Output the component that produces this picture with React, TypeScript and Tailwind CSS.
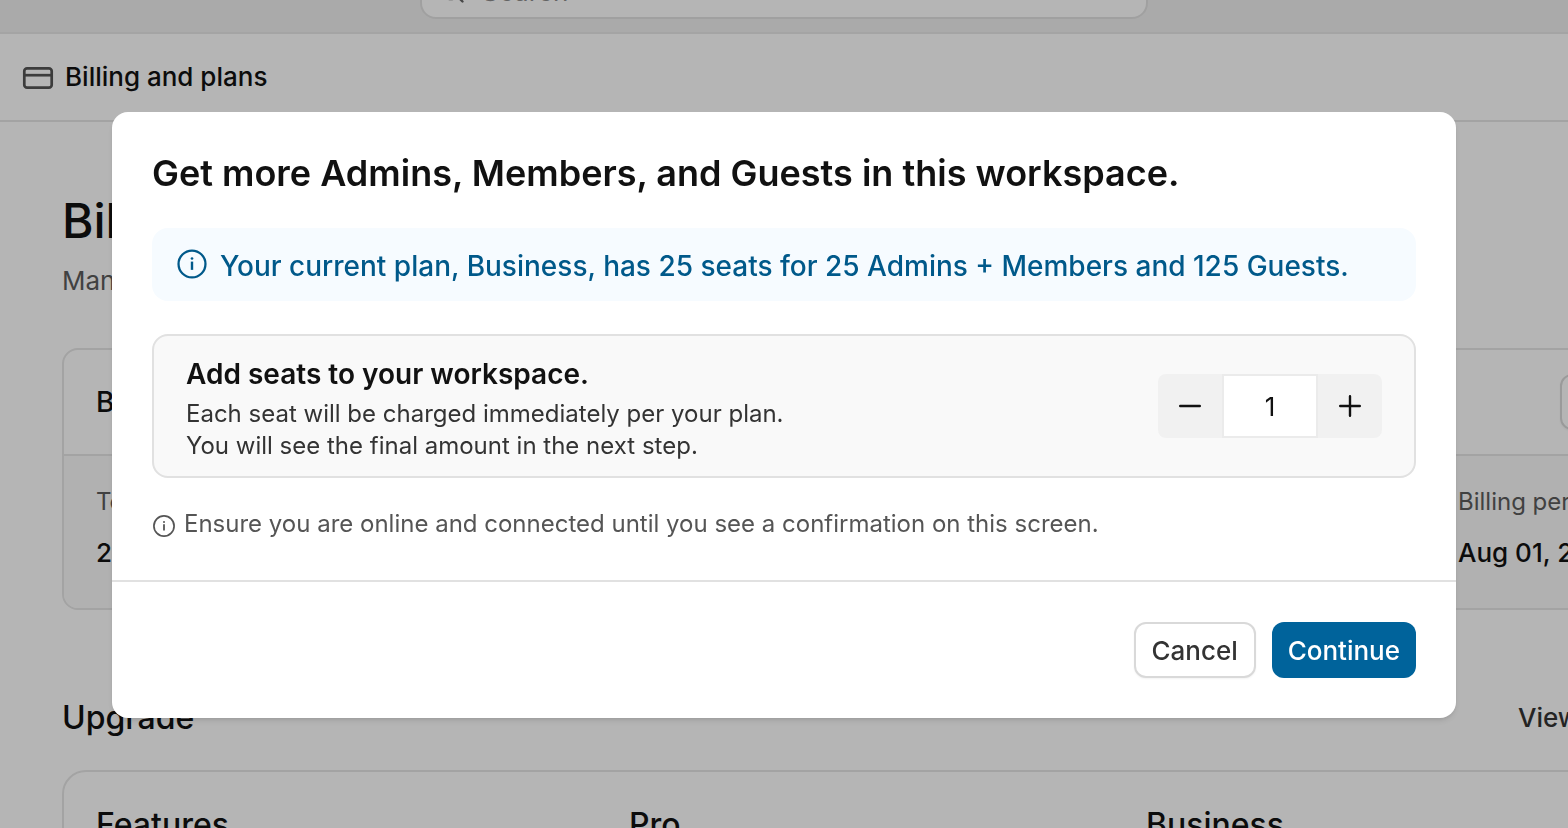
import { useState } from 'react';
import { Search } from 'lucide-react';

const InfoIcon = ({ className }: { className: string }) => (
  <svg viewBox="0 0 24 24" fill="none" stroke="currentColor" className={className} aria-hidden="true">
    <circle cx="12" cy="12" r="10.1" strokeWidth="1.7" />
    <path d="M12 10.2v6.2" strokeWidth="1.8" />
    <circle cx="12" cy="7.9" r="1" fill="currentColor" stroke="none" />
  </svg>
);

const CardIcon = () => (
  <svg viewBox="0 0 32 32" fill="none" stroke="currentColor" strokeWidth="2.7" className="w-8 h-8" aria-hidden="true">
    <rect x="2.3" y="7.3" width="27.4" height="19.4" rx="2.8" />
    <path d="M2.3 14.2h27.4" />
  </svg>
);

const TopBar = () => (
  <div className="h-[34px] flex items-end justify-center pb-[13px] bg-[#f0f0f0] border-b-2 border-[#e8e8e8] overflow-hidden">
    <button
      type="button"
      className="shrink-0 w-[728px] h-14 px-4 flex items-center gap-4 bg-white border-2 border-[#e2e2e2] rounded-2xl text-[26px] leading-8 text-[#8d8d8d]"
    >
      <Search className="w-7 h-7 text-[#646464]" strokeWidth={2} />
      <span className="pt-0.5">Search</span>
    </button>
  </div>
);

const BillingPage = () => (
  <div className="h-screen overflow-hidden bg-white text-[#111111]">
    <TopBar />
    <header className="h-[88px] px-[22px] flex items-center gap-[11px] border-b-2 border-[#e6e6e6]">
      <span className="text-[#555555]">
        <CardIcon />
      </span>
      <span className="text-[26px] leading-8 font-medium">Billing and plans</span>
    </header>

    {/* wider than the window, runs off to the right */}
    <main className="w-[calc(100%+180px)] pl-[62px] pr-10 pt-[69px]">
      <h1 className="text-5xl leading-[60px] font-medium">Billing</h1>
      <p className="mt-[14px] text-[26px] leading-8 text-[#5c5c5c]">Manage your billing and plans</p>

      <section className="mt-[51px] border-2 border-[#e6e6e6] rounded-2xl overflow-hidden">
        <div className="h-[106px] px-8 flex items-center justify-between border-b-2 border-[#e6e6e6]">
          <h2 className="text-[28px] leading-9 font-medium">Business</h2>
          <button
            type="button"
            className="h-14 w-[114px] border-2 border-[#d9d9d9] rounded-xl text-[26px] font-medium text-[#333333] shadow-xs"
          >
            Edit
          </button>
        </div>
        <dl className="h-[152px] pl-8 pt-[30px] flex justify-between bg-[#f9f9f9]">
          <div>
            <dt className="text-2xl leading-8 text-[#5c5c5c]">Total seats</dt>
            <dd className="mt-[15px] text-[26px] leading-10 font-medium">25</dd>
          </div>
          <div className="w-[248px] whitespace-nowrap">
            <dt className="text-2xl leading-8 text-[#5c5c5c]">Billing period</dt>
            <dd className="mt-[15px] text-[26px] leading-10 font-medium">Aug 01, 2024</dd>
          </div>
        </dl>
      </section>

      <div className="mt-[88px] flex items-center justify-between">
        <h2 className="text-[32px] leading-10 font-medium">Upgrade</h2>
        <a href="#plans" className="w-[190px] text-[26px] leading-8 font-medium text-[#333333] whitespace-nowrap">
          View all plans
        </a>
      </div>

      <table className="mt-8 w-full table-fixed border-separate border-spacing-0 border-2 border-[#e6e6e6] rounded-3xl text-left text-[32px] leading-10">
        <thead>
          <tr>
            <th className="w-[565px] h-[106px] pl-8 font-medium">Features</th>
            <th className="w-[517px] font-medium">Pro</th>
            <th className="font-medium">Business</th>
          </tr>
        </thead>
      </table>
    </main>
  </div>
);

const SeatStepper = () => {
  const [seats, setSeats] = useState(1);

  return (
    <div className="shrink-0 h-16 flex rounded-lg overflow-hidden bg-[#f1f1f1] text-[#111111]">
      <button
        type="button"
        aria-label="Remove seat"
        onClick={() => setSeats(Math.max(1, seats - 1))}
        className="w-16 flex items-center justify-center"
      >
        <svg viewBox="0 0 24 24" className="w-6 h-6" stroke="currentColor" strokeWidth="2.4" strokeLinecap="round">
          <path d="M2.2 12h19.6" />
        </svg>
      </button>
      <input
        type="text"
        aria-label="Seats to add"
        value={seats}
        onChange={(e) => setSeats(Number(e.target.value) || 1)}
        className="w-24 bg-white border-2 border-[#ebebeb] text-center text-[26px] outline-none"
      />
      <button
        type="button"
        aria-label="Add seat"
        onClick={() => setSeats(seats + 1)}
        className="w-16 flex items-center justify-center"
      >
        <svg viewBox="0 0 24 24" className="w-6 h-6" stroke="currentColor" strokeWidth="2.4" strokeLinecap="round">
          <path d="M2.2 12h19.6M12 2.2v19.6" />
        </svg>
      </button>
    </div>
  );
};

const AddSeatsDialog = () => (
  <div className="fixed inset-0 flex items-start p-28 bg-black/29">
    <div role="dialog" aria-labelledby="seats-title" className="w-full bg-white rounded-2xl shadow-md">
      <div className="px-10 pt-9 pb-10">
        <h2 id="seats-title" className="text-4xl leading-[50px] font-semibold text-[#111111]">
          Get more Admins, Members, and Guests in this workspace.
        </h2>

        <div className="mt-[30px] px-6 pt-5 pb-[17px] flex items-start gap-3 bg-[#f6fbff] rounded-2xl text-[#00598a]">
          <InfoIcon className="shrink-0 w-8 h-8" />
          <p className="text-[28px] leading-9 font-medium">
            Your current plan, Business, has 25 seats for 25 Admins + Members and 125 Guests.
          </p>
        </div>

        <div className="mt-[33px] px-8 flex items-center justify-between bg-[#f9f9f9] border-2 border-[#e1e1e1] rounded-2xl">
          <div className="pt-5 pb-[14px]">
            <h3 className="text-[28px] leading-9 font-semibold text-[#111111]">Add seats to your workspace.</h3>
            <p className="mt-[6px] text-2xl leading-8 text-[#333333]">
              Each seat will be charged immediately per your plan.
              <br />
              You will see the final amount in the next step.
            </p>
          </div>
          <SeatStepper />
        </div>

        <div className="mt-[30px] flex items-end gap-2 text-2xl leading-8 text-[#555555]">
          <InfoIcon className="shrink-0 w-6 h-6 mb-0.5" />
          <p>Ensure you are online and connected until you see a confirmation on this screen.</p>
        </div>
      </div>

      <div className="p-10 flex justify-end gap-4 border-t-2 border-[#e1e1e1] text-[26px] font-medium">
        <button
          type="button"
          className="h-14 w-[122px] bg-white border-2 border-[#d9d9d9] rounded-xl text-[#333333] shadow-xs"
        >
          Cancel
        </button>
        <button type="button" className="h-14 px-4 bg-[#00639b] rounded-xl text-white">
          Continue
        </button>
      </div>
    </div>
  </div>
);

const App = () => (
  <div className="font-['Inter','Liberation_Sans',sans-serif]">
    <BillingPage />
    <AddSeatsDialog />
  </div>
);

export default App;
